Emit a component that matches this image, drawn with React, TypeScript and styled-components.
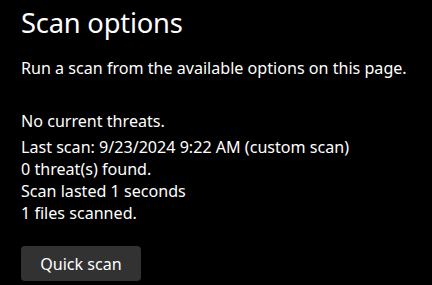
import React from "react";
import styled, { createGlobalStyle } from "styled-components";

const GlobalStyle = createGlobalStyle`
	html, body {
		margin: 0;
		padding: 0;
		background: #000000;
	}
	body {
		font-family: "Noto Sans", "Open Sans", sans-serif;
		color: #ffffff;
	}
`;

const Page = styled.div`
	display: flex;
	flex-direction: column;
	align-items: flex-start;
	width: 432px;
	height: 285px;
	padding: 4px 0 0 21px;
	box-sizing: border-box;
	overflow: hidden;
`;

const Title = styled.h1`
	margin: 0;
	font-size: 27.3px;
	font-weight: 400;
	line-height: 38px;
	letter-spacing: -0.2px;
`;

const Subtitle = styled.p`
	margin: 16px 0 0;
	font-size: 16.1px;
	line-height: 20px;
`;

const Status = styled.div`
	display: flex;
	flex-direction: column;
	margin-top: 32px;
	font-size: 16.1px;
	line-height: 22px;
`;

const StatusLine = styled.div<{ $gap?: number }>`
	margin-bottom: ${(p) => p.$gap ?? 0}px;
`;

const Button = styled.button`
	margin-top: 22px;
	width: 120px;
	height: 35px;
	border: none;
	border-radius: 4px;
	background: #323232;
	color: #ffffff;
	font-family: inherit;
	font-size: 16.1px;
	padding: 0;
`;

export default function App() {
	return (
		<>
			<GlobalStyle />
			<Page>
				<Title>Scan options</Title>
				<Subtitle>Run a scan from the available options on this page.</Subtitle>
				<Status>
					<StatusLine $gap={4}>No current threats.</StatusLine>
					<StatusLine>Last scan: 9/23/2024 9:22 AM (custom scan)</StatusLine>
					<StatusLine>0 threat(s) found.</StatusLine>
					<StatusLine>Scan lasted 1 seconds</StatusLine>
					<StatusLine>1 files scanned.</StatusLine>
				</Status>
				<Button>Quick scan</Button>
			</Page>
		</>
	);
}
